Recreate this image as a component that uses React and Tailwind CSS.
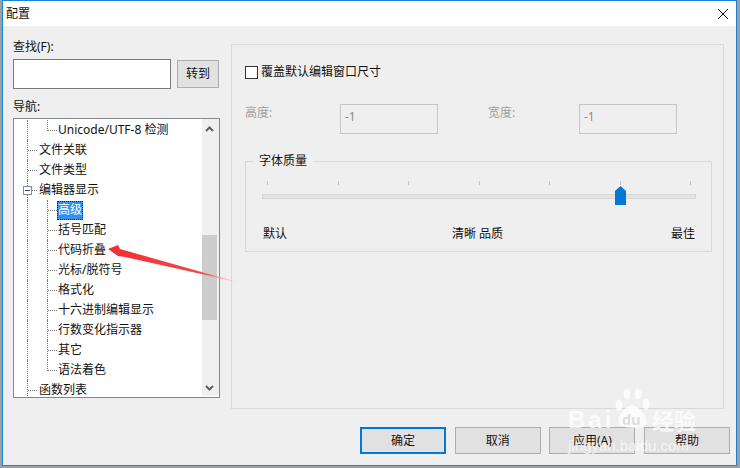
const font = { fontFamily: '"Noto Sans", "Noto Sans CJK SC", sans-serif' };

const rows = [
  { label: "Unicode/UTF-8 检测", depth: 2, last: true },
  { label: "文件关联", depth: 1 },
  { label: "文件类型", depth: 1 },
  { label: "编辑器显示", depth: 1, open: true },
  { label: "高级", depth: 2, selected: true },
  { label: "括号匹配", depth: 2 },
  { label: "代码折叠", depth: 2 },
  { label: "光标/脱符号", depth: 2 },
  { label: "格式化", depth: 2 },
  { label: "十六进制编辑显示", depth: 2 },
  { label: "行数变化指示器", depth: 2 },
  { label: "其它", depth: 2 },
  { label: "语法着色", depth: 2, last: true },
  { label: "函数列表", depth: 1 },
];

const ticks = [0, 1, 2, 3, 4, 5, 6];

function TreeRow({ row }) {
  const isChild = row.depth === 2;
  return (
    <div className="relative h-5 flex items-center shrink-0">
      {/* dotted guides */}
      <span className="absolute left-[13px] top-0 h-5 border-l border-dotted border-[#777]" />
      {isChild && (
        <span
          className={`absolute left-[33px] top-0 border-l border-dotted border-[#777] ${
            row.last ? "h-[11px]" : "h-5"
          }`}
        />
      )}
      <span
        className={`absolute top-[10px] border-t border-dotted border-[#777] ${
          isChild ? "left-[34px] w-[9px]" : "left-[14px] w-[9px]"
        }`}
      />
      {row.open && (
        <span className="absolute left-[9px] top-[6px] w-[9px] h-[9px] bg-white border border-[#8a8a8a] flex items-center justify-center">
          <span className="w-[5px] h-px bg-[#2b3f9e]" />
        </span>
      )}
      {row.selected ? (
        <span className="relative ml-[43px] h-[19px] px-[1px] whitespace-nowrap bg-[#3390f0] text-white text-[12px] leading-[18px] outline-1 -outline-offset-1 outline-dotted outline-[#222]">
          {row.label}
        </span>
      ) : (
        <span
          className={`relative whitespace-nowrap text-[12px] leading-[16px] text-[#111] ${
            isChild ? "ml-[44px]" : "ml-[25px]"
          }`}
        >
          {row.label}
        </span>
      )}
    </div>
  );
}

function FooterButton({ label, primary }) {
  return (
    <button
      className={`w-[86px] h-[27px] bg-[#e1e1e1] text-[12px] text-[#111] ${
        primary ? "border-2 border-[#0078d7]" : "border border-[#adadad]"
      }`}
    >
      {label}
    </button>
  );
}

export default function App() {
  return (
    <div className="relative w-[740px] h-[468px] overflow-hidden bg-[#9aa0a6]" style={font}>
      <div className="ml-[2px] w-[735px] h-[466px] border border-[#1883d7] bg-[#efefef] flex flex-col">
        {/* title bar */}
        <div className="h-[25px] bg-white flex items-center justify-between pl-[3px] pr-[6px] shrink-0">
          <span className="text-[12px] text-[#111]">配置</span>
          <svg width="12" height="12" viewBox="0 0 12 12" className="mr-[1px]">
            <path d="M1 1 L11 11 M11 1 L1 11" stroke="#111" strokeWidth="1" fill="none" />
          </svg>
        </div>

        <div className="flex flex-1 pl-[10px] pt-[13px]">
          {/* left column */}
          <div className="w-[207px] shrink-0">
            <div className="text-[12px] leading-[16px] text-[#111] h-[20px]">查找(F):</div>
            <div className="flex items-center gap-[6px]">
              <input className="w-[158px] h-[30px] bg-white border border-[#7a7a7a] outline-none" />
              <button className="w-[42px] h-[28px] bg-[#e1e1e1] border border-[#adadad] text-[12px] text-[#111]">
                转到
              </button>
            </div>
            <div className="text-[12px] leading-[16px] text-[#111] mt-[10px] h-[19px]">导航:</div>
            <div className="relative w-[207px] h-[280px] bg-white border border-[#828790] overflow-hidden">
              <div className="flex flex-col pt-[1px]">
                {rows.map((row) => (
                  <TreeRow key={row.label} row={row} />
                ))}
              </div>
              {/* scrollbar */}
              <div className="absolute right-0 top-0 bottom-[1px] w-[17px] pr-[2px] bg-[#f0f0f0] flex flex-col">
                <div className="h-[17px] flex items-center justify-center mt-[1px]">
                  <svg width="9" height="6" viewBox="0 0 9 6">
                    <path d="M1 5 L4.5 1.5 L8 5" stroke="#606060" strokeWidth="2" fill="none" />
                  </svg>
                </div>
                <div className="h-[85px] bg-[#cdcdcd] mt-[98px]" />
                <div className="flex-1" />
                <div className="h-[17px] flex items-center justify-center">
                  <svg width="9" height="6" viewBox="0 0 9 6">
                    <path d="M1 1 L4.5 4.5 L8 1" stroke="#606060" strokeWidth="2" fill="none" />
                  </svg>
                </div>
              </div>
            </div>
          </div>

          {/* right panel */}
          <div className="ml-[11px] mt-[5px] w-[493px] h-[365px] border border-[#d9d9d9] pl-[13px] pr-[11px] pt-[20px]">
            <label className="flex items-center h-[14px] text-[12px] text-[#111]">
              <span className="w-[13px] h-[13px] bg-white border border-[#333] mr-[3px]" />
              覆盖默认编辑窗口尺寸
            </label>
            <div className="flex mt-[25px] h-[31px]">
              <span className="w-[95px] text-[12px] text-[#a0a0a0] leading-[18px]">高度:</span>
              <div className="w-[98px] h-[30px] border border-[#c6c6c6] text-[12px] text-[#8a8a8a] pl-[4px] pt-[3px]">-1</div>
              <span className="ml-[50px] w-[91px] text-[12px] text-[#a0a0a0] leading-[18px]">宽度:</span>
              <div className="w-[98px] h-[30px] border border-[#c6c6c6] text-[12px] text-[#8a8a8a] pl-[4px] pt-[3px]">-1</div>
            </div>
            {/* font quality group */}
            <div className="relative mt-[26px] w-[467px] h-[91px] border border-[#d9d9d9] pl-[16px] pr-[15px] pt-[19px]">
              <span className="absolute left-[7px] -top-[9px] bg-[#efefef] px-[6px] text-[12px] leading-[16px] text-[#111]">
                字体质量
              </span>
              <div className="flex justify-between px-[5px] h-[4px]">
                {ticks.map((t) => (
                  <span key={t} className="w-px h-[4px] bg-[#c4c4c4]" />
                ))}
              </div>
              <div className="relative h-[5px] mt-[9px] bg-[#e2e3e3] border border-[#d6d6d6]">
                <svg
                  width="11"
                  height="19"
                  viewBox="0 0 11 19"
                  className="absolute left-[352px] -top-[9px]"
                >
                  <path d="M0 5 L5.5 0 L11 5 V19 H0 Z" fill="#0078d7" />
                </svg>
              </div>
              <div className="relative flex mt-[27px] text-[12px] text-[#111] leading-[16px] pl-[1px]">
                <span className="w-[189px]">默认</span>
                <span className="w-[219px]">清晰 品质</span>
                <span>最佳</span>
              </div>
            </div>
          </div>
        </div>

        {/* footer buttons */}
        <div className="flex justify-end gap-[8.67px] pr-[6px] pb-[11px] -mt-[1px]">
          <FooterButton label="确定" primary />
          <FooterButton label="取消" />
          <FooterButton label="应用(A)" />
          <FooterButton label="帮助" />
        </div>
      </div>

      {/* red arrow annotation */}
      <svg className="absolute left-0 top-0 pointer-events-none" width="740" height="468">
        <defs>
          <linearGradient id="tail" x1="108" y1="248" x2="238" y2="283" gradientUnits="userSpaceOnUse">
            <stop offset="0" stopColor="#ee2f35" />
            <stop offset="0.7" stopColor="#f4474a" />
            <stop offset="1" stopColor="#fbc4c4" />
          </linearGradient>
        </defs>
        <path d="M108 249 L118 245 L120 249 L237 282 L125 257 L118 256 Z" fill="url(#tail)" />
      </svg>

      {/* watermark */}
      <div className="absolute left-[567px] top-[388px] w-[140px] h-[72px] pointer-events-none">
        <svg className="absolute left-[47px] top-0" width="38" height="41" viewBox="0 0 38 41">
          <ellipse cx="5" cy="17" rx="3.5" ry="5.5" fill="#fff" fillOpacity="0.8" />
          <ellipse cx="13" cy="6" rx="3.5" ry="5.5" fill="#fff" fillOpacity="0.8" />
          <ellipse cx="24" cy="6" rx="3.5" ry="5.5" fill="#fff" fillOpacity="0.8" />
          <ellipse cx="32" cy="16" rx="3.5" ry="5.5" fill="#fff" fillOpacity="0.8" />
          <path d="M18 17 C12 17 2 29 5 36 C8 41 29 41 32 36 C35 29 24 17 18 17 Z" fill="#fff" fillOpacity="0.8" />
        </svg>
        <span className="absolute left-[1px] top-[18px] text-[24px] tracking-[3px] leading-[28px] font-bold text-white/75" style={{ fontFamily: '"Liberation Sans", sans-serif' }}>
          Bai
        </span>
        <span className="absolute left-[55px] top-[22px] text-[15px] leading-[20px] font-bold text-[#dedede]" style={{ fontFamily: '"Liberation Sans", sans-serif' }}>
          du
        </span>
        <span className="absolute left-[85px] top-[18px] text-[22px] leading-[28px] font-bold text-white/75">
          经验
        </span>
        <span className="absolute left-[1px] top-[49px] text-[15px] leading-[18px] text-white/70" style={{ fontFamily: '"Liberation Sans", sans-serif' }}>
          jingyan.baidu.com
        </span>
      </div>
    </div>
  );
}
